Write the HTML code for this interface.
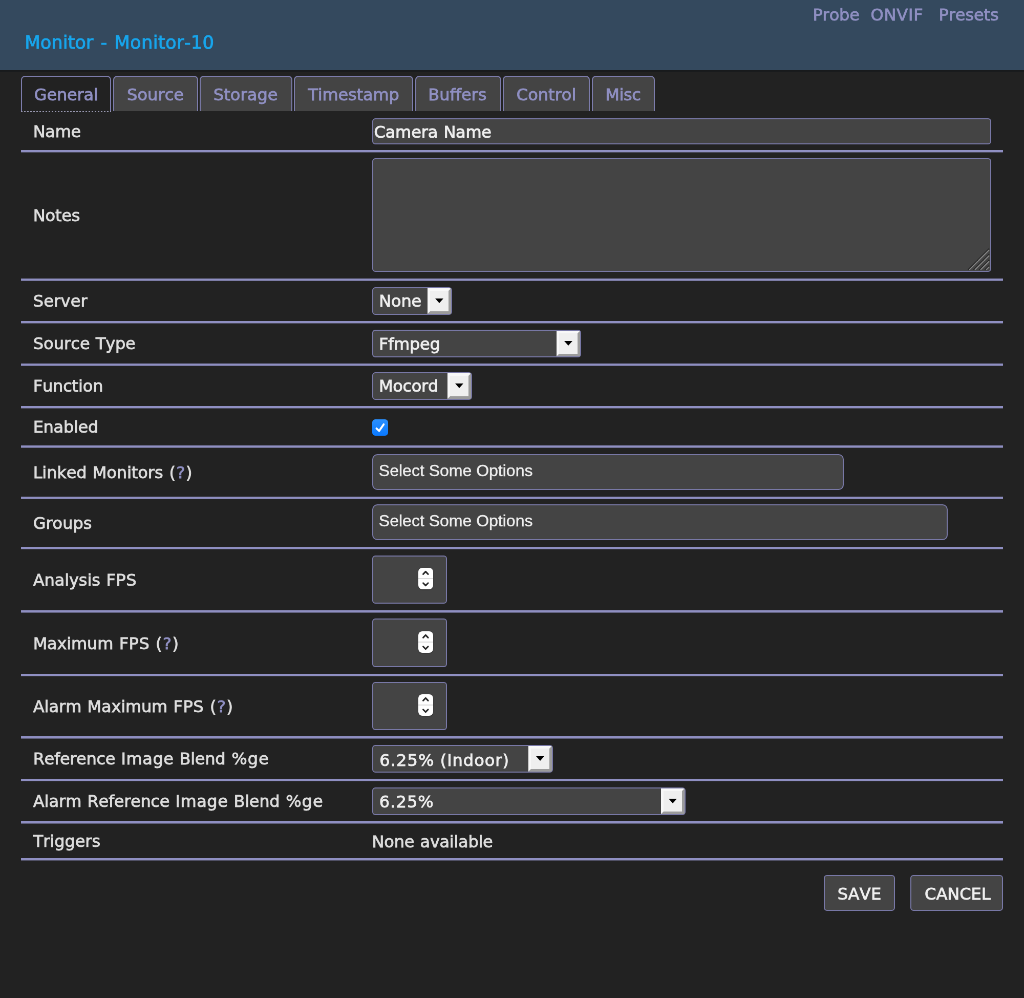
<!DOCTYPE html>
<html lang="en">
<head>
<meta charset="utf-8">
<title>ZM - Monitor - Monitor-10</title>
<style>
html,body{margin:0;padding:0;background:#222222;}
html{width:1024px;height:998px;overflow:hidden;}
body{position:relative;width:1024px;height:998px;overflow:hidden;}
/* The page is laid out on a 2000px-wide canvas and scaled to the 1024px viewport. */
#page{position:absolute;left:0;top:0;width:2000px;height:1949px;overflow:hidden;background:#222222;color:#dddddd;
  transform:scale(0.512);transform-origin:0 0;will-change:transform;
  font-family:"DejaVu Sans","Liberation Sans",sans-serif;font-size:32px;line-height:40px;font-kerning:none;
  -webkit-text-stroke:1px;}
div,span,ul,li,h2,i,a.t{position:absolute;margin:0;padding:0;box-sizing:border-box;list-style:none;}
a{color:#8f8fc2;text-decoration:none;}
h2{font-weight:normal;}
.t{white-space:nowrap;line-height:40px;display:block;}
.w{position:static;}
.lk{color:#8f8fc2;}
.hv{font-family:"Liberation Sans",sans-serif;-webkit-text-stroke:0.5px;}
#header{left:0;top:0;width:2000px;height:140px;background:#34495e;border-bottom:3px solid #181a1c;}
#headerButtons{left:0;top:0;}
ul.tabList{left:0;top:0;}
li.tab{top:148px;height:69px;border:2px solid #7c7cab;border-bottom:0;border-radius:8px 8px 0 0;background:#444444;}
li.tab.active{background:#222222;}
li.tab.active:after{content:"";position:absolute;left:-2px;right:-2px;bottom:-1px;height:1px;background:repeating-linear-gradient(90deg,#c4c4e6 0,#c4c4e6 3px,transparent 3px,transparent 6px);}
#contentTable{left:0;top:0;}
.row{left:41px;width:1918px;}
.row:after{content:"";position:absolute;left:0;right:0;bottom:0;height:4px;background:#8f8fc2;box-shadow:0 1px 0 rgba(143,143,194,.5);}
.field{border:2px solid #7878a6;background:#444444;border-radius:6px;}
.grip{right:0;bottom:0;width:44px;height:44px;}
.grip svg{position:absolute;left:0;top:0;}
.sel .btn{right:0;top:0;bottom:0;background:#efefef;border:5px solid;border-color:#f8f8f8 #9b9b9b #9b9b9b #f8f8f8;border-radius:0 3px 3px 0;}
.sel .btn i{left:50%;top:50%;margin:-5px 0 0 -8px;width:0;height:0;border:8px solid transparent;border-top:9px solid #000000;border-bottom:0;}
.cb{background:linear-gradient(#2a90ff,#0a79ff);border-radius:6px;}
.cb svg{position:absolute;left:0;top:0;}
.chosen{border-radius:10px;}
.num .spin{right:25px;top:50%;margin-top:-23px;width:29px;height:42px;background:#ffffff;border-radius:8px;box-shadow:0 1px 2px rgba(0,0,0,.35);}
.num .spin:before{content:"";position:absolute;left:0;right:0;top:20px;height:2px;background:#dcdcdc;}
.num .spin svg{position:absolute;left:0;top:0;}
#contentButtons{left:0;top:0;}
</style>
</head>
<body>
<div id="page">
<div id="header">
  <div id="headerButtons">
    <a class="t lk" style="left:1587.44px;top:9.04px;letter-spacing:-0.13px;">Probe</a>
    <a class="t lk" style="left:1700.6px;top:9.04px;letter-spacing:0.8px;">ONVIF</a>
    <a class="t lk" style="left:1833.53px;top:9.04px;letter-spacing:-0.09px;">Presets</a>
  </div>
  <h2 class="t" style="left:48.31px;top:63.21px;font-size:35.4px;color:#17a5ec;word-spacing:1.21px;"><span class="w" style="letter-spacing:-0.08px">Monitor</span> <span class="w" style="margin-left:1.65px;letter-spacing:1.65px">-</span> <span class="w" style="letter-spacing:0.27px">Monitor-10</span></h2>
</div>
<ul class="tabList">
  <li class="tab active" style="left:41px;width:176px"><a class="t lk" style="left:23.77px;top:15.48px;letter-spacing:-0.18px;">General</a></li>
  <li class="tab" style="left:221px;width:166px"><a class="t lk" style="left:25.1px;top:15.48px;letter-spacing:0.06px;">Source</a></li>
  <li class="tab" style="left:390px;width:181px"><a class="t lk" style="left:24.75px;top:15.48px;letter-spacing:0.09px;">Storage</a></li>
  <li class="tab" style="left:574px;width:233px"><a class="t lk" style="left:25.38px;top:15.48px;letter-spacing:-0.15px;">Timestamp</a></li>
  <li class="tab" style="left:811px;width:168px"><a class="t lk" style="left:23.23px;top:15.48px;letter-spacing:-0.02px;">Buffers</a></li>
  <li class="tab" style="left:982px;width:170px"><a class="t lk" style="left:24.86px;top:15.48px;letter-spacing:0.02px;">Control</a></li>
  <li class="tab" style="left:1156px;width:123px"><a class="t lk" style="left:24.33px;top:15.48px;letter-spacing:-0.42px;">Misc</a></li>
</ul>
<div id="contentTable">
  <div class="row" style="top:219px;height:78px">
    <span class="t lbl" style="left:23.67px;top:17.5px;letter-spacing:-0.26px;">Name</span>
    <div class="field" style="left:686px;top:12px;width:1209px;height:51px;"><span class="t" style="left:1.46px;top:4.75px;color:#eeeeee;word-spacing:1.09px;"><span class="w" style="letter-spacing:-0.15px">Camera</span> <span class="w" style="letter-spacing:-0.26px">Name</span></span></div>
  </div>
  <div class="row" style="top:297px;height:251px">
    <span class="t lbl" style="left:23.67px;top:104px;letter-spacing:-0.14px;">Notes</span>
    <div class="field ta" style="left:686px;top:12px;width:1209px;height:222px;"><span class="grip"><svg viewBox="0 0 44 44" width="44" height="44"><path d="M0.5 42 L42 0.5" stroke="#242424" stroke-width="2" fill="none"/><path d="M3.1 42 L42 3.1" stroke="#858585" stroke-width="2.2" fill="none"/><path d="M11.5 42 L42 11.5" stroke="#242424" stroke-width="2" fill="none"/><path d="M14.1 42 L42 14.1" stroke="#858585" stroke-width="2.2" fill="none"/><path d="M22.5 42 L42 22.5" stroke="#242424" stroke-width="2" fill="none"/><path d="M25.1 42 L42 25.1" stroke="#858585" stroke-width="2.2" fill="none"/><path d="M33.5 42 L42 33.5" stroke="#242424" stroke-width="2" fill="none"/><path d="M36.1 42 L42 36.1" stroke="#858585" stroke-width="2.2" fill="none"/></svg></span></div>
  </div>
  <div class="row" style="top:548px;height:83px">
    <span class="t lbl" style="left:23.67px;top:20px;letter-spacing:0.23px;">Server</span>
    <div class="field sel" style="left:686px;top:13px;width:156px;height:54px;"><span class="t" style="left:11.27px;top:5.41px;color:#eeeeee;letter-spacing:-0.2px;">None</span><span class="btn" style="width:46px"><i></i></span></div>
  </div>
  <div class="row" style="top:631px;height:83px">
    <span class="t lbl" style="left:23.67px;top:20px;word-spacing:1.09px;"><span class="w" style="letter-spacing:0.06px">Source</span> <span class="w" style="letter-spacing:-0.21px">Type</span></span>
    <div class="field sel" style="left:686px;top:13px;width:408px;height:54px;"><span class="t" style="left:10.88px;top:5.81px;color:#eeeeee;letter-spacing:-0.24px;">Ffmpeg</span><span class="btn" style="width:46px"><i></i></span></div>
  </div>
  <div class="row" style="top:714px;height:83px">
    <span class="t lbl" style="left:23.67px;top:20px;letter-spacing:-0.15px;">Function</span>
    <div class="field sel" style="left:686px;top:13px;width:195px;height:54px;"><span class="t" style="left:10.88px;top:5.43px;color:#eeeeee;letter-spacing:-0.29px;">Mocord</span><span class="btn" style="width:46px"><i></i></span></div>
  </div>
  <div class="row" style="top:797px;height:77px">
    <span class="t lbl" style="left:23.67px;top:17px;letter-spacing:-0.27px;">Enabled</span>
    <div class="cb" style="left:686px;top:22px;width:31px;height:32px;"><svg viewBox="0 0 31 32" width="31" height="32"><path d="M8.4 17.8 L13.5 22.6 L22.4 9.8" fill="none" stroke="#ffffff" stroke-width="3.8" stroke-linecap="round" stroke-linejoin="round"/></svg></div>
  </div>
  <div class="row" style="top:874px;height:100px">
    <span class="t lbl" style="left:23.67px;top:28.5px;word-spacing:1.09px;"><span class="w" style="letter-spacing:-0.12px">Linked</span> <span class="w" style="letter-spacing:-0.07px">Monitors</span> <span class="w" style="margin:0 -0.76px 0 0.76px;letter-spacing:1.51px">(<a class="lk">?</a>)</span></span>
    <div class="field chosen" style="left:686px;top:13px;width:921px;height:70px;"><span class="t hv" style="left:10.87px;top:10px;color:#eeeeee;">Select Some Options</span></div>
  </div>
  <div class="row" style="top:974px;height:98px">
    <span class="t lbl" style="left:23.67px;top:27.5px;letter-spacing:-0.01px;">Groups</span>
    <div class="field chosen" style="left:686px;top:11px;width:1124px;height:70px;"><span class="t hv" style="left:10.87px;top:10.43px;color:#eeeeee;">Select Some Options</span></div>
  </div>
  <div class="row" style="top:1072px;height:124px">
    <span class="t lbl" style="left:23.67px;top:40.5px;word-spacing:1.09px;"><span class="w" style="letter-spacing:-0.08px">Analysis</span> <span class="w" style="margin:0 -0.26px 0 0.26px;letter-spacing:0.52px">FPS</span></span>
    <div class="field num" style="left:686px;top:13px;width:146px;height:94px;"><span class="spin"><svg viewBox="0 0 29 42" width="29" height="42"><path d="M9.5 12.4 L14.3 7.4 L19.1 12.4" fill="none" stroke="#262626" stroke-width="3" stroke-linecap="round" stroke-linejoin="round"/><path d="M9.5 29.8 L14.3 34.6 L19.1 29.8" fill="none" stroke="#262626" stroke-width="3" stroke-linecap="round" stroke-linejoin="round"/></svg></span></div>
  </div>
  <div class="row" style="top:1196px;height:124px">
    <span class="t lbl" style="left:23.67px;top:40.5px;word-spacing:1.09px;"><span class="w" style="letter-spacing:-0.17px">Maximum</span> <span class="w" style="margin:0 -0.26px 0 0.26px;letter-spacing:0.52px">FPS</span> <span class="w" style="margin:0 -0.76px 0 0.76px;letter-spacing:1.51px">(<a class="lk">?</a>)</span></span>
    <div class="field num" style="left:686px;top:12px;width:146px;height:95px;"><span class="spin"><svg viewBox="0 0 29 42" width="29" height="42"><path d="M9.5 12.4 L14.3 7.4 L19.1 12.4" fill="none" stroke="#262626" stroke-width="3" stroke-linecap="round" stroke-linejoin="round"/><path d="M9.5 29.8 L14.3 34.6 L19.1 29.8" fill="none" stroke="#262626" stroke-width="3" stroke-linecap="round" stroke-linejoin="round"/></svg></span></div>
  </div>
  <div class="row" style="top:1320px;height:122px">
    <span class="t lbl" style="left:23.67px;top:39.5px;word-spacing:1.09px;"><span class="w" style="letter-spacing:-0.01px">Alarm</span> <span class="w" style="letter-spacing:-0.17px">Maximum</span> <span class="w" style="margin:0 -0.26px 0 0.26px;letter-spacing:0.52px">FPS</span> <span class="w" style="margin:0 -0.76px 0 0.76px;letter-spacing:1.51px">(<a class="lk">?</a>)</span></span>
    <div class="field num" style="left:686px;top:12px;width:146px;height:94px;"><span class="spin"><svg viewBox="0 0 29 42" width="29" height="42"><path d="M9.5 12.4 L14.3 7.4 L19.1 12.4" fill="none" stroke="#262626" stroke-width="3" stroke-linecap="round" stroke-linejoin="round"/><path d="M9.5 29.8 L14.3 34.6 L19.1 29.8" fill="none" stroke="#262626" stroke-width="3" stroke-linecap="round" stroke-linejoin="round"/></svg></span></div>
  </div>
  <div class="row" style="top:1442px;height:83px">
    <span class="t lbl" style="left:23.67px;top:20px;word-spacing:1.09px;"><span class="w" style="letter-spacing:-0.32px">Reference</span> <span class="w" style="margin:0 -0.26px 0 0.26px;letter-spacing:0.53px">Image</span> <span class="w" style="letter-spacing:-0.23px">Blend</span> <span class="w" style="margin:0 -0.51px 0 0.51px;letter-spacing:1.01px">%ge</span></span>
    <div class="field sel" style="left:686px;top:13px;width:353px;height:54px;"><span class="t" style="left:11.79px;top:8.48px;color:#eeeeee;word-spacing:1.09px;"><span class="w" style="margin:0 -0.55px 0 0.55px;letter-spacing:1.1px">6.25%</span> <span class="w" style="margin:0 -0.49px 0 0.49px;letter-spacing:0.99px">(Indoor)</span></span><span class="btn" style="width:46px"><i></i></span></div>
  </div>
  <div class="row" style="top:1525px;height:83px">
    <span class="t lbl" style="left:23.67px;top:20px;word-spacing:1.09px;"><span class="w" style="letter-spacing:-0.01px">Alarm</span> <span class="w" style="letter-spacing:-0.32px">Reference</span> <span class="w" style="margin:0 -0.26px 0 0.26px;letter-spacing:0.53px">Image</span> <span class="w" style="letter-spacing:-0.23px">Blend</span> <span class="w" style="margin:0 -0.51px 0 0.51px;letter-spacing:1.01px">%ge</span></span>
    <div class="field sel" style="left:686px;top:13px;width:612px;height:54px;"><span class="t" style="left:11.69px;top:6.15px;color:#eeeeee;letter-spacing:1.1px;">6.25%</span><span class="btn" style="width:46px"><i></i></span></div>
  </div>
  <div class="row" style="top:1608px;height:72px">
    <span class="t lbl" style="left:23.67px;top:14.5px;letter-spacing:-0.04px;">Triggers</span>
    <span class="t" style="left:685.6px;top:16.27px;word-spacing:1.09px;"><span class="w" style="letter-spacing:-0.2px">None</span> <span class="w" style="letter-spacing:-0.28px">available</span></span>
  </div>
</div>
<div id="contentButtons">
  <div class="field btnx" style="left:1609px;top:1709px;width:139px;height:70px;"><span class="t" style="left:24.83px;top:14.84px;color:#eeeeee;letter-spacing:0.39px;">SAVE</span></div>
  <div class="field btnx" style="left:1778px;top:1709px;width:181px;height:70px;"><span class="t" style="left:26.07px;top:14.84px;color:#eeeeee;letter-spacing:-0px;">CANCEL</span></div>
</div>
</div>
</body>
</html>
